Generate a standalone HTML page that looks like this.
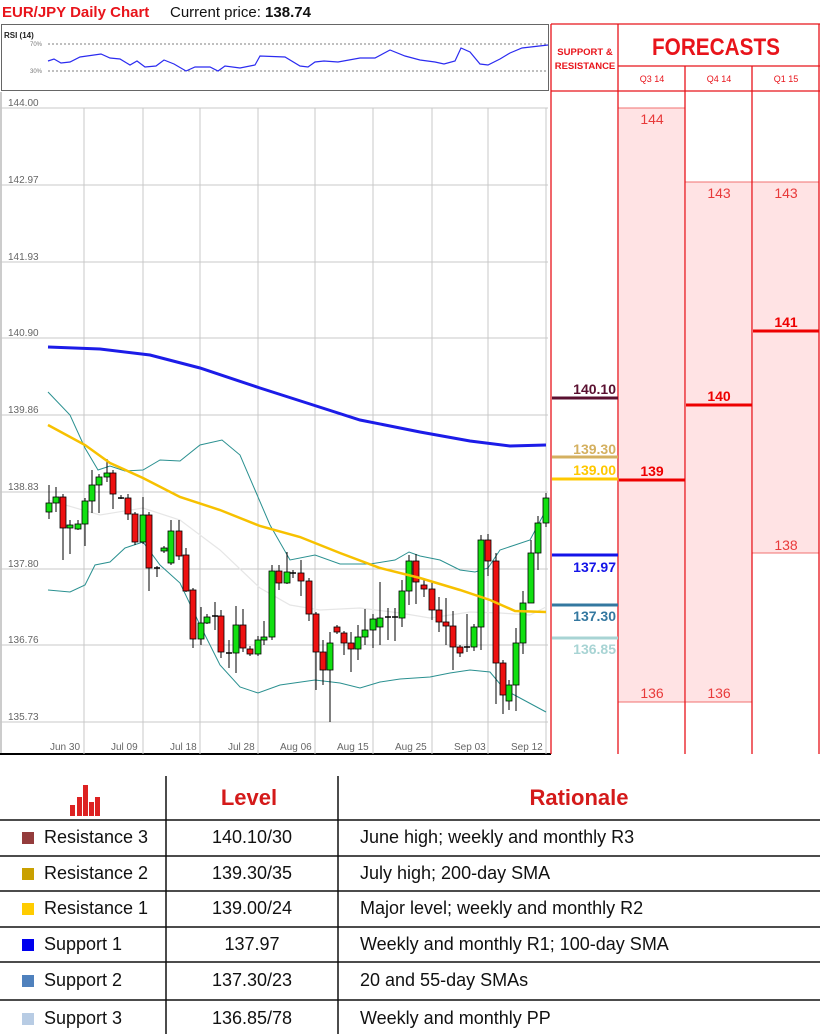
<!DOCTYPE html>
<html><head><meta charset="utf-8">
<style>
body{margin:0;width:820px;height:1034px;background:#fff;overflow:hidden;font-family:"Liberation Sans",sans-serif;position:relative}
svg{position:absolute;left:0;top:0}
.row{position:absolute;left:0;width:820px;height:36px;font-family:"Liberation Sans",sans-serif;font-size:18px;color:#111}
.row span{position:absolute;top:7px}
.sq{position:absolute;left:22px;top:12px;width:12px;height:12px}
</style></head><body>
<svg width="820" height="1034" viewBox="0 0 820 1034" id="s">
<text x="2" y="17" font-family="Liberation Sans" font-weight="bold" font-size="15" fill="#e8141b">EUR/JPY Daily Chart</text>
<text x="170" y="17" font-family="Liberation Sans" font-size="15" fill="#111">Current price: <tspan font-weight="bold">138.74</tspan></text>
<rect x="1.5" y="24.5" width="547" height="66" fill="#fff" stroke="#666"/>
<text x="4" y="38" font-size="8" font-weight="bold" fill="#222">RSI (14)</text>
<text x="30" y="46" font-size="6" fill="#777">70%</text>
<text x="30" y="73" font-size="6" fill="#777">30%</text>
<line x1="48" y1="44" x2="548" y2="44" stroke="#555" stroke-dasharray="2,2" stroke-width="0.8"/>
<line x1="48" y1="71" x2="548" y2="71" stroke="#555" stroke-dasharray="2,2" stroke-width="0.8"/>
<polyline fill="none" stroke="#2b2bf0" stroke-width="1.2" points="48,61 54,59 61,63 70,62 80,57 101,54 110,58 120,59 130,65 137,61 145,67 156,66 164,60 174,64 186,71 195,67 210,67 218,71 225,66 240,68 255,65 260,56 285,57 300,66 308,67 315,62 324,61 338,62 360,58 375,58 390,50 405,56 420,60 435,62 444,64 455,61 461,48 470,52 480,64 488,65 500,59 510,53 522,48 548,45"/>
<line x1="1" y1="92" x2="1" y2="754" stroke="#999"/>
<line x1="0" y1="754" x2="551" y2="754" stroke="#000" stroke-width="2"/>
<g stroke="#c8c8c8" stroke-width="1">
<line x1="0" y1="108" x2="548" y2="108"/><line x1="0" y1="185" x2="548" y2="185"/><line x1="0" y1="262" x2="548" y2="262"/><line x1="0" y1="338" x2="548" y2="338"/><line x1="0" y1="415" x2="548" y2="415"/><line x1="0" y1="492" x2="548" y2="492"/><line x1="0" y1="569" x2="548" y2="569"/><line x1="0" y1="645" x2="548" y2="645"/><line x1="0" y1="722" x2="548" y2="722"/>
<line x1="84" y1="108" x2="84" y2="754"/><line x1="143" y1="108" x2="143" y2="754"/><line x1="200" y1="108" x2="200" y2="754"/><line x1="258" y1="108" x2="258" y2="754"/><line x1="315" y1="108" x2="315" y2="754"/><line x1="373" y1="108" x2="373" y2="754"/><line x1="432" y1="108" x2="432" y2="754"/><line x1="488" y1="108" x2="488" y2="754"/><line x1="546" y1="108" x2="546" y2="754"/>
</g>
<g font-size="10" fill="#666">
<text x="8" y="106">144.00</text><text x="8" y="183">142.97</text><text x="8" y="260">141.93</text><text x="8" y="336">140.90</text><text x="8" y="413">139.86</text><text x="8" y="490">138.83</text><text x="8" y="567">137.80</text><text x="8" y="643">136.76</text><text x="8" y="720">135.73</text>
<text x="50" y="750">Jun 30</text><text x="111" y="750">Jul 09</text><text x="170" y="750">Jul 18</text><text x="228" y="750">Jul 28</text><text x="280" y="750">Aug 06</text><text x="337" y="750">Aug 15</text><text x="395" y="750">Aug 25</text><text x="454" y="750">Sep 03</text><text x="511" y="750">Sep 12</text>
</g>
<polyline fill="none" stroke="#e6e6e6" stroke-width="1.2" points="48,500 100,515 143,508 180,520 220,550 260,588 290,605 320,610 360,608 400,613 430,618 470,612 500,613 530,615 546,607"/>
<polyline fill="none" stroke="#2a9090" stroke-width="1" points="48,392 70,415 85,448 98,470 110,466 125,471 143,470 160,460 180,461 200,445 222,440 240,455 255,490 270,525 290,560 315,555 340,564 370,564 395,560 409,552 420,556 440,560 460,570 475,572 488,568 500,550 515,545 530,540 546,510"/>
<polyline fill="none" stroke="#2a9090" stroke-width="1" points="48,590 70,592 85,585 95,565 110,562 125,548 143,542 160,565 180,583 200,625 220,665 240,687 258,693 280,685 315,680 340,683 360,688 380,682 400,679 430,677 450,673 470,670 490,672 505,690 520,698 546,712"/>
<polyline fill="none" stroke="#1c1ce8" stroke-width="3" points="48,347 100,349 150,355 200,368 260,388 310,404 360,420 420,432 470,441 510,446 546,445"/>
<g id="c"></g>
<polyline fill="none" stroke="#f7c100" stroke-width="2.5" points="48,425 85,445 110,463 143,478 180,497 220,510 260,526 300,537 340,553 380,568 420,578 460,590 490,600 515,611 546,612"/>
<rect x="619" y="108" width="66" height="594" fill="#ffe3e4"/>
<rect x="686" y="182" width="66" height="520" fill="#ffe3e4"/>
<rect x="753" y="182" width="66" height="371" fill="#ffe3e4"/>
<g stroke="#f07070" stroke-width="1">
<line x1="618" y1="108" x2="685" y2="108"/><line x1="685" y1="182" x2="819" y2="182"/><line x1="618" y1="702" x2="752" y2="702"/><line x1="752" y1="553" x2="819" y2="553"/>
</g>
<g stroke="#e8141b" stroke-width="1.3" fill="none">
<line x1="551" y1="24" x2="551" y2="754"/><line x1="618" y1="24" x2="618" y2="754"/><line x1="685" y1="66" x2="685" y2="754"/><line x1="752" y1="66" x2="752" y2="754"/><line x1="819" y1="24" x2="819" y2="754"/>
<line x1="551" y1="24" x2="820" y2="24"/><line x1="618" y1="66" x2="820" y2="66"/><line x1="551" y1="91" x2="820" y2="91"/>
</g>
<text x="585" y="55" text-anchor="middle" font-size="9.5" font-weight="bold" fill="#e8141b">SUPPORT &amp;</text>
<text x="585" y="69" text-anchor="middle" font-size="9.5" font-weight="bold" fill="#e8141b">RESISTANCE</text>
<text x="652" y="55" font-size="24" font-weight="bold" textLength="128" lengthAdjust="spacingAndGlyphs" fill="#e8141b">FORECASTS</text>
<g font-size="9" fill="#e8141b" text-anchor="middle"><text x="652" y="82">Q3 14</text><text x="719" y="82">Q4 14</text><text x="786" y="82">Q1 15</text></g>
<g font-size="14" fill="#e83a3a" text-anchor="middle">
<text x="652" y="124">144</text><text x="719" y="198">143</text><text x="786" y="198">143</text><text x="786" y="550">138</text><text x="652" y="698">136</text><text x="719" y="698">136</text>
</g>
<g stroke="#ee0000" stroke-width="3"><line x1="619" y1="480" x2="685" y2="480"/><line x1="686" y1="405" x2="752" y2="405"/><line x1="753" y1="331" x2="819" y2="331"/></g>
<g font-size="14" font-weight="bold" fill="#ee0000" text-anchor="middle"><text x="652" y="476">139</text><text x="719" y="401">140</text><text x="786" y="327">141</text></g>
<g stroke-width="3"><line x1="552" y1="398" x2="618" y2="398" stroke="#5a1030"/><line x1="552" y1="457" x2="618" y2="457" stroke="#d4b060"/><line x1="552" y1="479" x2="618" y2="479" stroke="#ffc800"/><line x1="552" y1="555" x2="618" y2="555" stroke="#1414e8"/><line x1="552" y1="605" x2="618" y2="605" stroke="#3478a0"/><line x1="552" y1="638" x2="618" y2="638" stroke="#a8d4d4"/></g>
<g font-size="14" font-weight="bold" text-anchor="end">
<text x="616" y="394" fill="#5a1030">140.10</text><text x="616" y="454" fill="#d4b060">139.30</text><text x="616" y="475" fill="#ffc800">139.00</text><text x="616" y="572" fill="#1414e8">137.97</text><text x="616" y="621" fill="#3478a0">137.30</text><text x="616" y="654" fill="#a8d4d4">136.85</text>
</g>
<g stroke="#111" stroke-width="1.5">
<line x1="0" y1="820" x2="820" y2="820"/><line x1="0" y1="856" x2="820" y2="856"/><line x1="0" y1="891" x2="820" y2="891"/><line x1="0" y1="927" x2="820" y2="927"/><line x1="0" y1="962" x2="820" y2="962"/><line x1="0" y1="1000" x2="820" y2="1000"/>
<line x1="166" y1="776" x2="166" y2="1034"/><line x1="338" y1="776" x2="338" y2="1034"/>
</g>
<g fill="#dd2222"><rect x="70" y="805" width="5" height="11"/><rect x="77" y="797" width="5" height="19"/><rect x="83" y="785" width="5" height="31"/><rect x="89" y="802" width="5" height="14"/><rect x="95" y="797" width="5" height="19"/></g>
<g font-size="22" font-weight="bold" fill="#d41a1a" text-anchor="middle"><text x="249" y="805">Level</text><text x="579" y="805">Rationale</text></g>
</svg>
<div class="row" style="top:820px"><div class="sq" style="background:#943c3c"></div><span style="left:44px">Resistance 3</span><span style="left:166px;width:172px;text-align:center">140.10/30</span><span style="left:360px">June high; weekly and monthly R3</span></div>
<div class="row" style="top:856px"><div class="sq" style="background:#c9a000"></div><span style="left:44px">Resistance 2</span><span style="left:166px;width:172px;text-align:center">139.30/35</span><span style="left:360px">July high; 200-day SMA</span></div>
<div class="row" style="top:891px"><div class="sq" style="background:#ffcc00"></div><span style="left:44px">Resistance 1</span><span style="left:166px;width:172px;text-align:center">139.00/24</span><span style="left:360px">Major level; weekly and monthly R2</span></div>
<div class="row" style="top:927px"><div class="sq" style="background:#0000ee"></div><span style="left:44px">Support 1</span><span style="left:166px;width:172px;text-align:center">137.97</span><span style="left:360px">Weekly and monthly R1; 100-day SMA</span></div>
<div class="row" style="top:962px;height:38px"><div class="sq" style="background:#4f81bd;top:13px"></div><span style="left:44px;top:8px">Support 2</span><span style="left:166px;width:172px;text-align:center;top:8px">137.30/23</span><span style="left:360px;top:8px">20 and 55-day SMAs</span></div>
<div class="row" style="top:1000px"><div class="sq" style="background:#b8cce4;top:13px"></div><span style="left:44px;top:8px">Support 3</span><span style="left:166px;width:172px;text-align:center;top:8px">136.85/78</span><span style="left:360px;top:8px">Weekly and monthly PP</span></div>
<script>
var d=[[49,512,503,485,519],[56,503,497,487,512],[63,497,528,494,560],[70,528,525,520,554],[78,529,524,520,530],[85,524,501,498,546],[92,501,485,470,513],[99,485,477,474,513],[107,477,473,459,482],[113,473,494,470,509],[121,498,498,495,499],[128,498,514,494,520],[135,514,542,512,545],[143,542,515,497,544],[149,515,568,512,591],[157,568,568,566,577],[164,551,548,546,553],[171,563,531,520,565],[179,531,556,520,560],[186,555,591,548,592],[193,590,639,588,648],[201,639,623,607,645],[207,623,617,614,624],[215,616,616,602,630],[221,616,652,610,658],[229,653,653,640,668],[236,653,625,606,673],[243,625,648,609,652],[250,649,654,646,656],[258,654,640,636,656],[264,640,637,621,645],[272,637,571,565,640],[279,571,583,565,590],[287,583,572,552,584],[293,573,573,570,578],[301,573,581,560,596],[309,581,614,578,621],[316,614,652,612,690],[323,652,670,640,685],[330,670,643,632,722],[337,627,632,625,634],[344,633,643,631,655],[351,643,649,632,672],[358,649,637,625,660],[365,637,630,609,645],[373,630,619,614,648],[380,627,618,582,645],[388,617,617,608,640],[395,617,617,608,641],[402,618,591,580,627],[409,591,561,555,605],[416,561,582,554,604],[424,585,589,580,597],[432,589,610,582,620],[439,610,622,597,632],[446,622,626,598,645],[453,626,647,611,670],[460,647,653,645,657],[467,647,647,614,652],[474,647,627,624,651],[481,627,540,535,650],[488,540,561,534,576],[496,561,663,553,704],[503,663,695,660,714],[509,701,685,680,710],[516,685,643,628,711],[523,643,603,591,654],[531,603,553,540,573],[538,553,523,516,570],[546,523,498,493,527]];
var g=document.getElementById('c'),h='';
d.forEach(function(c){var x=c[0],o=c[1],cl=c[2],t=Math.min(o,cl),b=Math.max(o,cl),up=cl<o;
h+='<line x1="'+x+'" y1="'+c[3]+'" x2="'+x+'" y2="'+c[4]+'" stroke="#000" stroke-width="1"/>';
if(b-t<1.5)h+='<line x1="'+(x-3)+'" y1="'+t+'" x2="'+(x+3)+'" y2="'+t+'" stroke="#000" stroke-width="1.5"/>';
else h+='<rect x="'+(x-3)+'" y="'+t+'" width="6" height="'+(b-t)+'" fill="'+(up?'#11e011':'#ee1111')+'" stroke="#000" stroke-width="0.8"/>';});
g.innerHTML=h;
</script>
</body></html>
